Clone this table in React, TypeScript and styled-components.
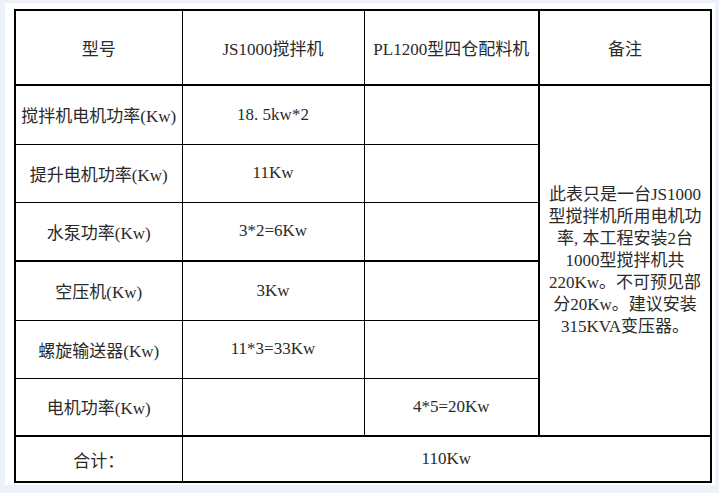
import React, { FC } from 'react'
import styled, { createGlobalStyle } from 'styled-components'

const GlobalStyle = createGlobalStyle`
  html,
  body {
    margin: 0;
    background: #edf1f9;
  }

  body {
    font-family: "Liberation Serif", "Noto Sans CJK SC", serif;
  }
`

const Sheet = styled.div`
  box-sizing: border-box;
  width: 710px;
  height: 482px;
  margin: 3px 0 0 5px;
  padding: 6px 4px 2px 9px;
  background: #fff;
`

const Table = styled.table`
  width: 696px;
  table-layout: fixed;
  border-collapse: collapse;
  border: 2px solid #000;
  color: #2a2a2a;
  font-size: 17px;
`

interface iRowProps {
  $h: number
  $heavy?: boolean
}

const Row = styled.tr<iRowProps>`
  height: ${({ $h }) => $h}px;

  ${({ $heavy }) => $heavy && `
    td { border-bottom-width: 2px; }
  `}
`

interface iCellProps {
  $split?: boolean
}

const Cell = styled.td<iCellProps>`
  border: 1px solid #000;
  padding: 0;
  text-align: center;
  vertical-align: middle;
  white-space: nowrap;
  ${({ $split }) => $split && 'border-left-width: 2px;'}
`

const Remark = styled.td`
  border: 1px solid #000;
  border-left-width: 2px;
  border-bottom-width: 2px;
  padding: 0;
  text-align: center;
  vertical-align: middle;
`

const RemarkLine = styled.div`
  line-height: 22px;
  white-space: nowrap;
`

const rows = [
  { label: '搅拌机电机功率(Kw)', js: '18. 5kw*2', pl: '', h: 59 },
  { label: '提升电机功率(Kw)', js: '11Kw', pl: '', h: 58 },
  { label: '水泵功率(Kw)', js: '3*2=6Kw', pl: '', h: 59, heavy: true },
  { label: '空压机(Kw)', js: '3Kw', pl: '', h: 59 },
  { label: '螺旋输送器(Kw)', js: '11*3=33Kw', pl: '', h: 58 },
  { label: '电机功率(Kw)', js: '', pl: '4*5=20Kw', h: 58, heavy: true },
]

const remark = [
  '此表只是一台JS1000',
  '型搅拌机所用电机功',
  '率, 本工程安装2台',
  '1000型搅拌机共',
  '220Kw。不可预见部',
  '分20Kw。建议安装',
  '315KVA变压器。',
]

const App: FC = () => (
  <>
    <GlobalStyle />
    <Sheet>
      <Table>
        <colgroup>
          <col style={{ width: 167 }} />
          <col style={{ width: 182 }} />
          <col style={{ width: 175 }} />
          <col style={{ width: 172 }} />
        </colgroup>
        <tbody>
          <Row $h={75} $heavy>
            <Cell>型号</Cell>
            <Cell>JS1000搅拌机</Cell>
            <Cell>PL1200型四仓配料机</Cell>
            <Cell $split>备注</Cell>
          </Row>
          {rows.map((r, i) => (
            <Row key={r.label} $h={r.h} $heavy={r.heavy}>
              <Cell>{r.label}</Cell>
              <Cell>{r.js}</Cell>
              <Cell>{r.pl}</Cell>
              {i === 0 && (
                <Remark rowSpan={rows.length}>
                  {remark.map((line) => (
                    <RemarkLine key={line}>{line}</RemarkLine>
                  ))}
                </Remark>
              )}
            </Row>
          ))}
          <Row $h={46}>
            <Cell>合计：</Cell>
            <Cell colSpan={3}>110Kw</Cell>
          </Row>
        </tbody>
      </Table>
    </Sheet>
  </>
)

export default App
